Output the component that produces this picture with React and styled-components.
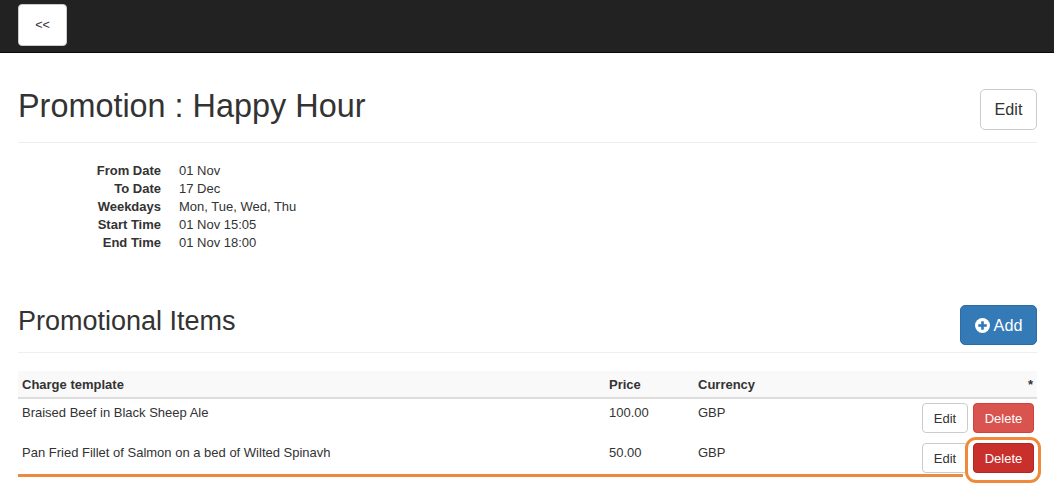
import React from "react";
import styled, { createGlobalStyle } from "styled-components";

const Global = createGlobalStyle`
  html, body { margin: 0; padding: 0; background: #fff; }
  body {
    font-family: "Liberation Sans", Arial, sans-serif;
    font-size: 13px;
    line-height: 18px;
    color: #333;
  }
  * { box-sizing: border-box; }
`;

const Root = styled.div`
  position: relative;
  min-height: 502px;
`;

const Navbar = styled.div`
  height: 53px;
  background: #222;
  border-bottom: 1px solid #080808;
  padding: 4px 18px 0;
`;

const BackButton = styled.button`
  width: 49px;
  height: 42px;
  background: #fff;
  border: 1px solid #ccc;
  border-radius: 4px;
  font-family: inherit;
  font-size: 12.6px;
  color: #333;
  padding: 0;
`;

const Page = styled.div`
  padding: 0 17px 0 18px;
`;

const Header = styled.div`
  display: flex;
  justify-content: space-between;
  align-items: flex-start;
  margin-top: ${(p) => p.$top}px;
  padding-bottom: ${(p) => p.$pb}px;
  border-bottom: 1px solid #eee;
`;

const Title = styled.h1`
  margin: 0;
  padding-top: ${(p) => p.$pt || 0}px;
  font-size: ${(p) => p.$size}px;
  font-weight: 500;
  line-height: 1.1;
  color: #333;
`;

const Btn = styled.button`
  font-family: inherit;
  font-size: ${(p) => p.$fs || 13}px;
  height: ${(p) => p.$h}px;
  width: ${(p) => p.$w}px;
  padding: 0;
  border-radius: ${(p) => p.$r || 4}px;
  border: 1px solid ${(p) => p.$border || "#ccc"};
  background: ${(p) => p.$bg || "#fff"};
  color: ${(p) => p.$color || "#333"};
  display: inline-flex;
  align-items: center;
  justify-content: center;
  gap: 4px;
`;

const DL = styled.dl`
  display: grid;
  grid-template-columns: 143px auto;
  column-gap: 18px;
  margin: 19px 0 0;
  line-height: 18px;
`;

const DT = styled.dt`
  font-weight: bold;
  text-align: right;
`;

const DD = styled.dd`
  margin: 0;
`;

const Table = styled.table`
  width: 100%;
  border-collapse: collapse;
  margin-top: 18px;
`;

const TH = styled.th`
  text-align: ${(p) => p.$align || "left"};
  font-weight: bold;
  background: #f9f9f9;
  padding: 5px 4px 3px;
  height: 26px;
  border-bottom: 2px solid #ddd;
  width: ${(p) => p.$w || "auto"};
  vertical-align: middle;
`;

const TD = styled.td`
  padding: 5px 3px 6px 4px;
  vertical-align: top;
  text-align: ${(p) => p.$align || "left"};
`;

const ActionCell = styled(TD)`
  padding-top: 4px;
`;

const Actions = styled.div`
  display: flex;
  justify-content: flex-end;
  gap: 5px;
`;

const OrangeLine = styled.div`
  position: absolute;
  left: 18px;
  top: 474px;
  width: 945px;
  height: 3px;
  background: #ef8a3c;
`;

const OrangeRing = styled.div`
  position: absolute;
  left: 965px;
  top: 437px;
  width: 76px;
  height: 46px;
  border: 3px solid #ef8a3c;
  border-radius: 11px;
`;

const PlusIcon = () => (
  <svg width="15" height="15" viewBox="0 0 16 16">
    <circle cx="8" cy="8" r="8" fill="#fff" />
    <rect x="3.5" y="6.6" width="9" height="2.8" fill="#337ab7" />
    <rect x="6.6" y="3.5" width="2.8" height="9" fill="#337ab7" />
  </svg>
);

const details = [
  ["From Date", "01 Nov"],
  ["To Date", "17 Dec"],
  ["Weekdays", "Mon, Tue, Wed, Thu"],
  ["Start Time", "01 Nov 15:05"],
  ["End Time", "01 Nov 18:00"],
];

const items = [
  { name: "Braised Beef in Black Sheep Ale", price: "100.00", cur: "GBP", active: false },
  { name: "Pan Fried Fillet of Salmon on a bed of Wilted Spinavh", price: "50.00", cur: "GBP", active: true },
];

export default function App() {
  return (
    <Root>
      <Global />
      <Navbar>
        <BackButton>&lt;&lt;</BackButton>
      </Navbar>
      <Page>
        <Header $top={36} $pb={12}>
          <Title $size={32.4}>Promotion : Happy Hour</Title>
          <Btn $fs={16.2} $h={41} $w={57} $r={5}>Edit</Btn>
        </Header>
        <DL>
          {details.map(([k, v]) => (
            <React.Fragment key={k}>
              <DT>{k}</DT>
              <DD>{v}</DD>
            </React.Fragment>
          ))}
        </DL>
        <Header $top={53} $pb={7}>
          <Title $size={27} $pt={2}>Promotional Items</Title>
          <Btn $fs={16.2} $h={40} $w={77} $r={5} $bg="#337ab7" $border="#2e6da4" $color="#fff">
            <PlusIcon />
            Add
          </Btn>
        </Header>
        <Table>
          <thead>
            <tr>
              <TH $w="587px">Charge template</TH>
              <TH $w="89px">Price</TH>
              <TH $w="120px">Currency</TH>
              <TH $align="right">*</TH>
            </tr>
          </thead>
          <tbody>
            {items.map((it) => (
              <tr key={it.name}>
                <TD>{it.name}</TD>
                <TD>{it.price}</TD>
                <TD>{it.cur}</TD>
                <ActionCell $align="right">
                  <Actions>
                    <Btn $h={30} $w={46}>Edit</Btn>
                    <Btn
                      $h={30}
                      $w={61}
                      $bg={it.active ? "#c9302c" : "#d9534f"}
                      $border={it.active ? "#ac2925" : "#d43f3a"}
                      $color="#fff"
                    >
                      Delete
                    </Btn>
                  </Actions>
                </ActionCell>
              </tr>
            ))}
          </tbody>
        </Table>
      </Page>
      <OrangeLine />
      <OrangeRing />
    </Root>
  );
}
